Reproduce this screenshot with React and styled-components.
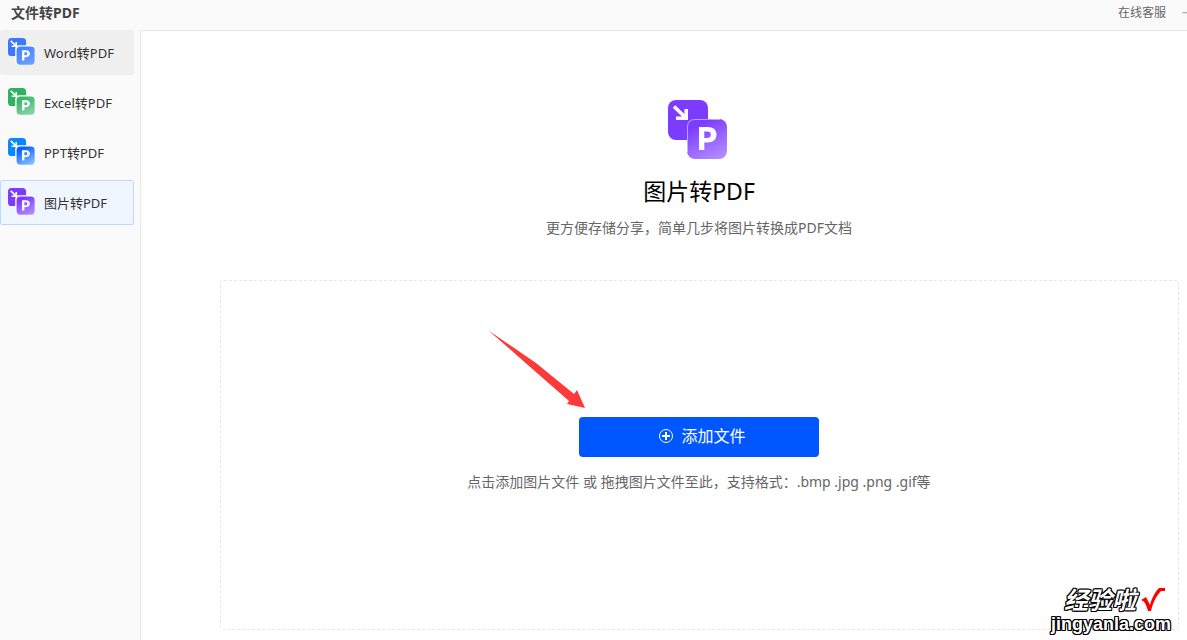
import React, { useId } from "react";
import styled, { createGlobalStyle, css } from "styled-components";

const GlobalStyle = createGlobalStyle`
  *, *::before, *::after { box-sizing: border-box; }
  body {
    margin: 0;
    background: #fafafa;
    color: #333;
    font-family: "Noto Sans", "Noto Sans CJK SC", sans-serif;
    font-size: 13px;
  }
  button, a { font: inherit; }
`;

const Page = styled.div`
  position: relative;
  display: flex;
  flex-direction: column;
  min-height: 100vh;
  overflow: hidden;
`;

const TitleBar = styled.header`
  display: flex;
  align-items: center;
  justify-content: space-between;
  height: 30px;
  padding: 0 0 4px 11px;
`;

const AppTitle = styled.span`
  font-size: 14px;
  line-height: 20px;
  font-weight: 700;
  color: #444;
`;

const TitleActions = styled.div`
  display: flex;
  align-items: center;
  gap: 16px;
`;

const ServiceLink = styled.a`
  font-size: 12px;
  line-height: 18px;
  color: #666;
  text-decoration: none;
`;

const MinimizeButton = styled.button`
  display: flex;
  width: 5px;
  height: 10px;
  padding: 0;
  border: 0;
  background: none;
  overflow: hidden;
`;

const Body = styled.div`
  display: flex;
  flex: 1;
`;

const Sidebar = styled.nav`
  display: flex;
  flex-direction: column;
  flex: none;
  gap: 5px;
  width: 140px;
  padding-right: 6px;
`;

const NavItem = styled.button`
  display: flex;
  align-items: flex-start;
  gap: 8px;
  height: 45px;
  padding: 7px 7px 0;
  border: 1px solid transparent;
  border-radius: 2px;
  background: none;
  color: #333;
  font-size: 13px;
  line-height: 30px;
  cursor: pointer;
  ${(p) => p.$state === "hover" && css`
    background: #efefef;
  `}
  ${(p) => p.$state === "active" && css`
    background: #eff6ff;
    border-color: #b9dafe;
  `}
`;

const Main = styled.main`
  display: flex;
  flex-direction: column;
  flex: 1;
  padding: 69px 8px 10px 79px;
  border-top: 1px solid #e8e8e8;
  border-left: 1px solid #e8e8e8;
  background: #fff;
`;

const Hero = styled.section`
  display: flex;
  flex-direction: column;
  align-items: center;
  height: 180px;
  padding-right: 1px;
`;

const HeroTitle = styled.h1`
  margin: 12px 0 0;
  font-size: 23px;
  line-height: 34px;
  font-weight: 400;
  color: #000;
`;

const Description = styled.p`
  margin: ${(p) => (p.$spacious ? "15px" : "10px")} 0 0;
  font-size: 14px;
  line-height: 20px;
  text-align: center;
  color: #666;
`;

const DropZone = styled.section`
  position: relative;
  display: flex;
  flex: 1;
  flex-direction: column;
  align-items: center;
  justify-content: center;
  min-height: 240px;
  padding: 0 1px 2px 0;
  border: 1px dashed #e6e6e6;
  border-radius: 4px;
`;

const AddButton = styled.button`
  display: flex;
  align-items: center;
  justify-content: center;
  gap: 7px;
  width: 240px;
  height: 40px;
  padding: 0 0 2px 6px;
  border: 0;
  border-radius: 4px;
  background: #0057ff;
  color: #fff;
  font-size: 16px;
  line-height: 24px;
  cursor: pointer;
`;

const PointerArrow = styled.svg`
  position: absolute;
  top: 49px;
  left: 50%;
  margin-left: -212px;
  pointer-events: none;
`;

const Watermark = styled.div`
  position: absolute;
  right: 16px;
  bottom: 6px;
  display: flex;
  flex-direction: column;
  align-items: flex-end;
  font-weight: 700;
  color: #fff;
  text-shadow:
    -1px -1px 0 #000, 0 -1px 0 #000, 1px -1px 0 #000,
    -1px 0 0 #000, 1px 0 0 #000,
    -1px 1px 0 #000, 0 1px 0 #000, 1px 1px 0 #000;
`;

const WatermarkName = styled.div`
  display: flex;
  align-items: center;
  gap: 5px;
  padding-right: 6px;
  font-size: 24px;
  line-height: 28px;
  font-style: italic;
`;

const WatermarkSite = styled.div`
  font-family: "Liberation Sans", sans-serif;
  font-size: 18px;
  line-height: 20px;
`;

function ConvertIcon({ size, back, from, to, rim = 1 }) {
  const id = useId();
  return (
    <svg width={size} height={size} viewBox="0 0 62 62" aria-hidden="true">
      <defs>
        <linearGradient id={id} x1="0.2" y1="0" x2="0.7" y2="1">
          <stop offset="0.15" stopColor={from} />
          <stop offset="1" stopColor={to} />
        </linearGradient>
      </defs>
      <rect width="40" height="40" rx="8" fill={back} />
      <path d="M6 6.500L17 17M18.200 9V18.200H8" fill="none" stroke="#fff" strokeWidth="3.600" />
      {rim > 1 && <rect x={19 - rim} y={19 - rim} width={40 + rim} height={40 + rim} rx="9" fill="#fff" />}
      <rect x="19" y="19" width="40" height="40" rx="8" fill={`url(#${id})`} />
      {rim === 1 && (
        <path
          d="M19.500 52V27Q19.500 19.500 27 19.500H52"
          fill="none"
          stroke="#fff"
          strokeOpacity="0.5"
        />
      )}
      <path
        fillRule="evenodd"
        fill="#fff"
        d="M31 27H39.500C45.500 27 48.500 30 48.500 34.500C48.500 39.500 45 42.500 39.500 42.500H36.300V50H31ZM36.300 31.500V38H39C41.500 38 42.800 37 42.800 34.700C42.800 32.500 41.500 31.500 39 31.500Z"
      />
    </svg>
  );
}

const tools = [
  { label: "Word转PDF", back: "#3b78ff", from: "#4684ff", to: "#6e9eff", state: "hover" },
  { label: "Excel转PDF", back: "#2bb360", from: "#3db66b", to: "#87d3a5" },
  { label: "PPT转PDF", back: "#0788ff", from: "#0862ff", to: "#83bdff" },
  { label: "图片转PDF", back: "#7c3cff", from: "#7c3cff", to: "#b18aff", state: "active" },
];

export default function App() {
  return (
    <Page>
      <GlobalStyle />
      <TitleBar>
        <AppTitle>文件转PDF</AppTitle>
        <TitleActions>
          <ServiceLink href="#service">在线客服</ServiceLink>
          <MinimizeButton aria-label="最小化">
            <svg width="10" height="10" viewBox="0 0 10 10">
              <path d="M1 4.500H10" stroke="#333" />
            </svg>
          </MinimizeButton>
        </TitleActions>
      </TitleBar>
      <Body>
        <Sidebar>
          {tools.map((t) => (
            <NavItem key={t.label} $state={t.state}>
              <ConvertIcon size={28} back={t.back} from={t.from} to={t.to} rim={3} />
              {t.label}
            </NavItem>
          ))}
        </Sidebar>
        <Main>
          <Hero>
            <ConvertIcon size={62} back="#7c3cff" from="#7c3cff" to="#b18aff" />
            <HeroTitle>图片转PDF</HeroTitle>
            <Description>更方便存储分享，简单几步将图片转换成PDF文档</Description>
          </Hero>
          <DropZone>
            <PointerArrow width="98" height="80" viewBox="0 0 98 80" aria-hidden="true">
              <path d="M0.500 0.500L48 33L86 64L89 60L97 78L79 74L81 71L41 36Z" fill="#fd3a3a" />
            </PointerArrow>
            <AddButton>
              <svg width="16" height="16" viewBox="0 0 16 16" fill="none" stroke="#fff" aria-hidden="true">
                <circle cx="8" cy="8" r="6.500" />
                <path d="M8 4V12M4 8H12" strokeWidth="2" />
              </svg>
              添加文件
            </AddButton>
            <Description $spacious>
              点击添加图片文件 或 拖拽图片文件至此，支持格式：.bmp .jpg .png .gif等
            </Description>
          </DropZone>
        </Main>
      </Body>
      <Watermark>
        <WatermarkName>
          经验啦
          <svg width="24" height="26" viewBox="0 0 24 26" aria-hidden="true">
            <path d="M0 13L5 10L9 18C11 10 15 4 18 1H24V4H20C16 8 12 15 10 24H7C6 20 4 15 2 14Z" fill="#f00" />
          </svg>
        </WatermarkName>
        <WatermarkSite>jingyanla.com</WatermarkSite>
      </Watermark>
    </Page>
  );
}
